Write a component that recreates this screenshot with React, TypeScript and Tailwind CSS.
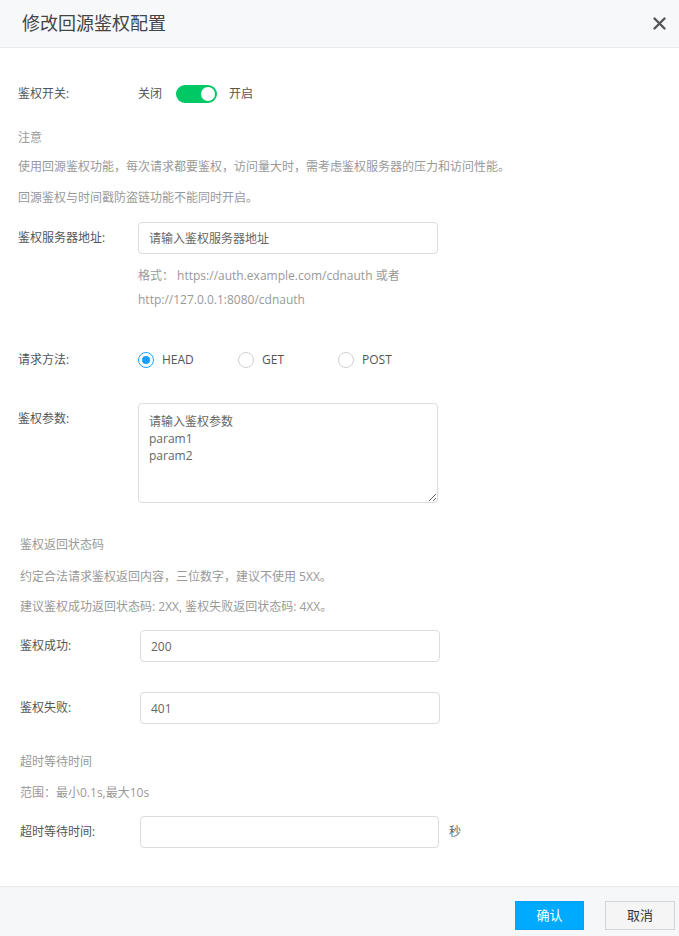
import React, { useState } from "react";

const font = { fontFamily: '"Open Sans", "Noto Sans CJK SC", sans-serif' };

type Method = "HEAD" | "GET" | "POST";

const Radio: React.FC<{ label: Method; checked: boolean; onSelect: () => void }> = ({ label, checked, onSelect }) => (
  <label className="flex w-[100px] cursor-pointer items-center gap-2" onClick={onSelect}>
    <span
      className={
        checked
          ? "flex h-4 w-4 items-center justify-center rounded-full border border-[#1a9fff] bg-white"
          : "flex h-4 w-4 items-center justify-center rounded-full border border-[#cfcfcf] bg-white"
      }
    >
      {checked && <span className="h-2 w-2 rounded-full bg-[#1a9fff]" />}
    </span>
    <span className="text-[12px] text-[#555]">{label}</span>
  </label>
);

export default function App() {
  const [enabled, setEnabled] = useState(true);
  const [method, setMethod] = useState<Method>("HEAD");

  return (
    <div className="flex h-[936px] w-[679px] flex-col bg-white" style={font}>
      {/* header */}
      <div className="flex h-[48px] items-center justify-between border-b border-[#e8eaec] bg-[#f7f8fa] pl-[22px] pr-[8px]">
        <span className="text-[18px] text-[#444]">修改回源鉴权配置</span>
        <button className="flex h-6 w-6 items-center justify-center">
          <svg width="13" height="13" viewBox="0 0 13 13">
            <path d="M1.5 1.5 L11.5 11.5 M11.5 1.5 L1.5 11.5" stroke="#555" strokeWidth="2.4" strokeLinecap="round" />
          </svg>
        </button>
      </div>

      {/* body */}
      <div className="flex-1 text-[12px]">
        <div className="pl-[18px]">
          <div className="mt-[37px] flex h-[18px] items-center">
            <span className="w-[120px] text-[#555]">鉴权开关:</span>
            <span className="text-[#555]">关闭</span>
            <button
              onClick={() => setEnabled(!enabled)}
              className={
                enabled
                  ? "ml-[14px] flex h-[18px] w-[41px] items-center justify-end rounded-full bg-[#00c865] px-[2px]"
                  : "ml-[14px] flex h-[18px] w-[41px] items-center justify-start rounded-full bg-[#ccc] px-[2px]"
              }
            >
              <span className="h-[14px] w-[14px] rounded-full bg-white" />
            </button>
            <span className="ml-[12px] text-[#555]">开启</span>
          </div>

          <div className="mt-[25px] leading-5 text-[#999]">注意</div>
          <div className="mt-[9px] leading-5 text-[#999]">使用回源鉴权功能，每次请求都要鉴权，访问量大时，需考虑鉴权服务器的压力和访问性能。</div>
          <div className="mt-[11px] leading-5 text-[#999]">回源鉴权与时间戳防盗链功能不能同时开启。</div>

          <div className="mt-[14px] flex items-center">
            <span className="w-[120px] text-[#555]">鉴权服务器地址:</span>
            <input
              className="h-8 w-[300px] rounded-[4px] border border-[#dcdcdc] px-[10px] text-[12px] text-[#555] outline-none placeholder:text-[#666]"
              placeholder="请输入鉴权服务器地址"
            />
          </div>
          <div className="ml-[120px] mt-[10px] leading-6 text-[#999]">
            <div>格式： https://auth.example.com/cdnauth 或者</div>
            <div>http://127.0.0.1:8080/cdnauth</div>
          </div>

          <div className="mt-[38px] flex h-5 items-center">
            <span className="w-[120px] text-[#555]">请求方法:</span>
            {(["HEAD", "GET", "POST"] as Method[]).map((m) => (
              <Radio key={m} label={m} checked={method === m} onSelect={() => setMethod(m)} />
            ))}
          </div>

          <div className="mt-[33px] flex items-start">
            <span className="w-[120px] leading-8 text-[#555]">鉴权参数:</span>
            <textarea
              className="h-[100px] w-[300px] rounded-[4px] border border-[#dcdcdc] px-[10px] py-[9px] text-[12px] leading-[17px] text-[#555] outline-none placeholder:text-[#666]"
              placeholder={"请输入鉴权参数\nparam1\nparam2"}
            />
          </div>
        </div>

        <div className="pl-[20px]">
          <div className="mt-[32px] leading-5 text-[#999]">鉴权返回状态码</div>
          <div className="mt-[12px] leading-5 text-[#999]">约定合法请求鉴权返回内容，三位数字，建议不使用 5XX。</div>
          <div className="mt-[10px] leading-5 text-[#999]">建议鉴权成功返回状态码: 2XX, 鉴权失败返回状态码: 4XX。</div>

          <div className="mt-[13px] flex items-center">
            <span className="w-[120px] text-[#555]">鉴权成功:</span>
            <input
              className="h-8 w-[300px] rounded-[4px] border border-[#dcdcdc] px-[10px] text-[12px] text-[#666] outline-none"
              defaultValue="200"
            />
          </div>
          <div className="mt-[30px] flex items-center">
            <span className="w-[120px] text-[#555]">鉴权失败:</span>
            <input
              className="h-8 w-[300px] rounded-[4px] border border-[#dcdcdc] px-[10px] text-[12px] text-[#666] outline-none"
              defaultValue="401"
            />
          </div>

          <div className="mt-[28px] leading-5 text-[#999]">超时等待时间</div>
          <div className="mt-[11px] leading-5 text-[#999]">范围：最小0.1s,最大10s</div>

          <div className="mt-[13px] flex items-center">
            <span className="w-[120px] text-[#555]">超时等待时间:</span>
            <input className="h-8 w-[299px] rounded-[4px] border border-[#dcdcdc] px-[10px] text-[12px] text-[#666] outline-none" />
            <span className="ml-[10px] text-[#666]">秒</span>
          </div>
        </div>
      </div>

      {/* footer */}
      <div className="flex h-[50px] items-start justify-end gap-[21px] border-t border-[#e8eaec] bg-[#f5f7f8] pr-[4px] pt-[14px]">
        <button className="h-[29px] w-[69px] border border-[#0a9ff0] bg-[#00aaff] text-[13px] text-white">确认</button>
        <button className="h-[29px] w-[70px] border border-[#d6d6d6] bg-[#f5f5f5] text-[13px] text-[#333]">取消</button>
      </div>
    </div>
  );
}
